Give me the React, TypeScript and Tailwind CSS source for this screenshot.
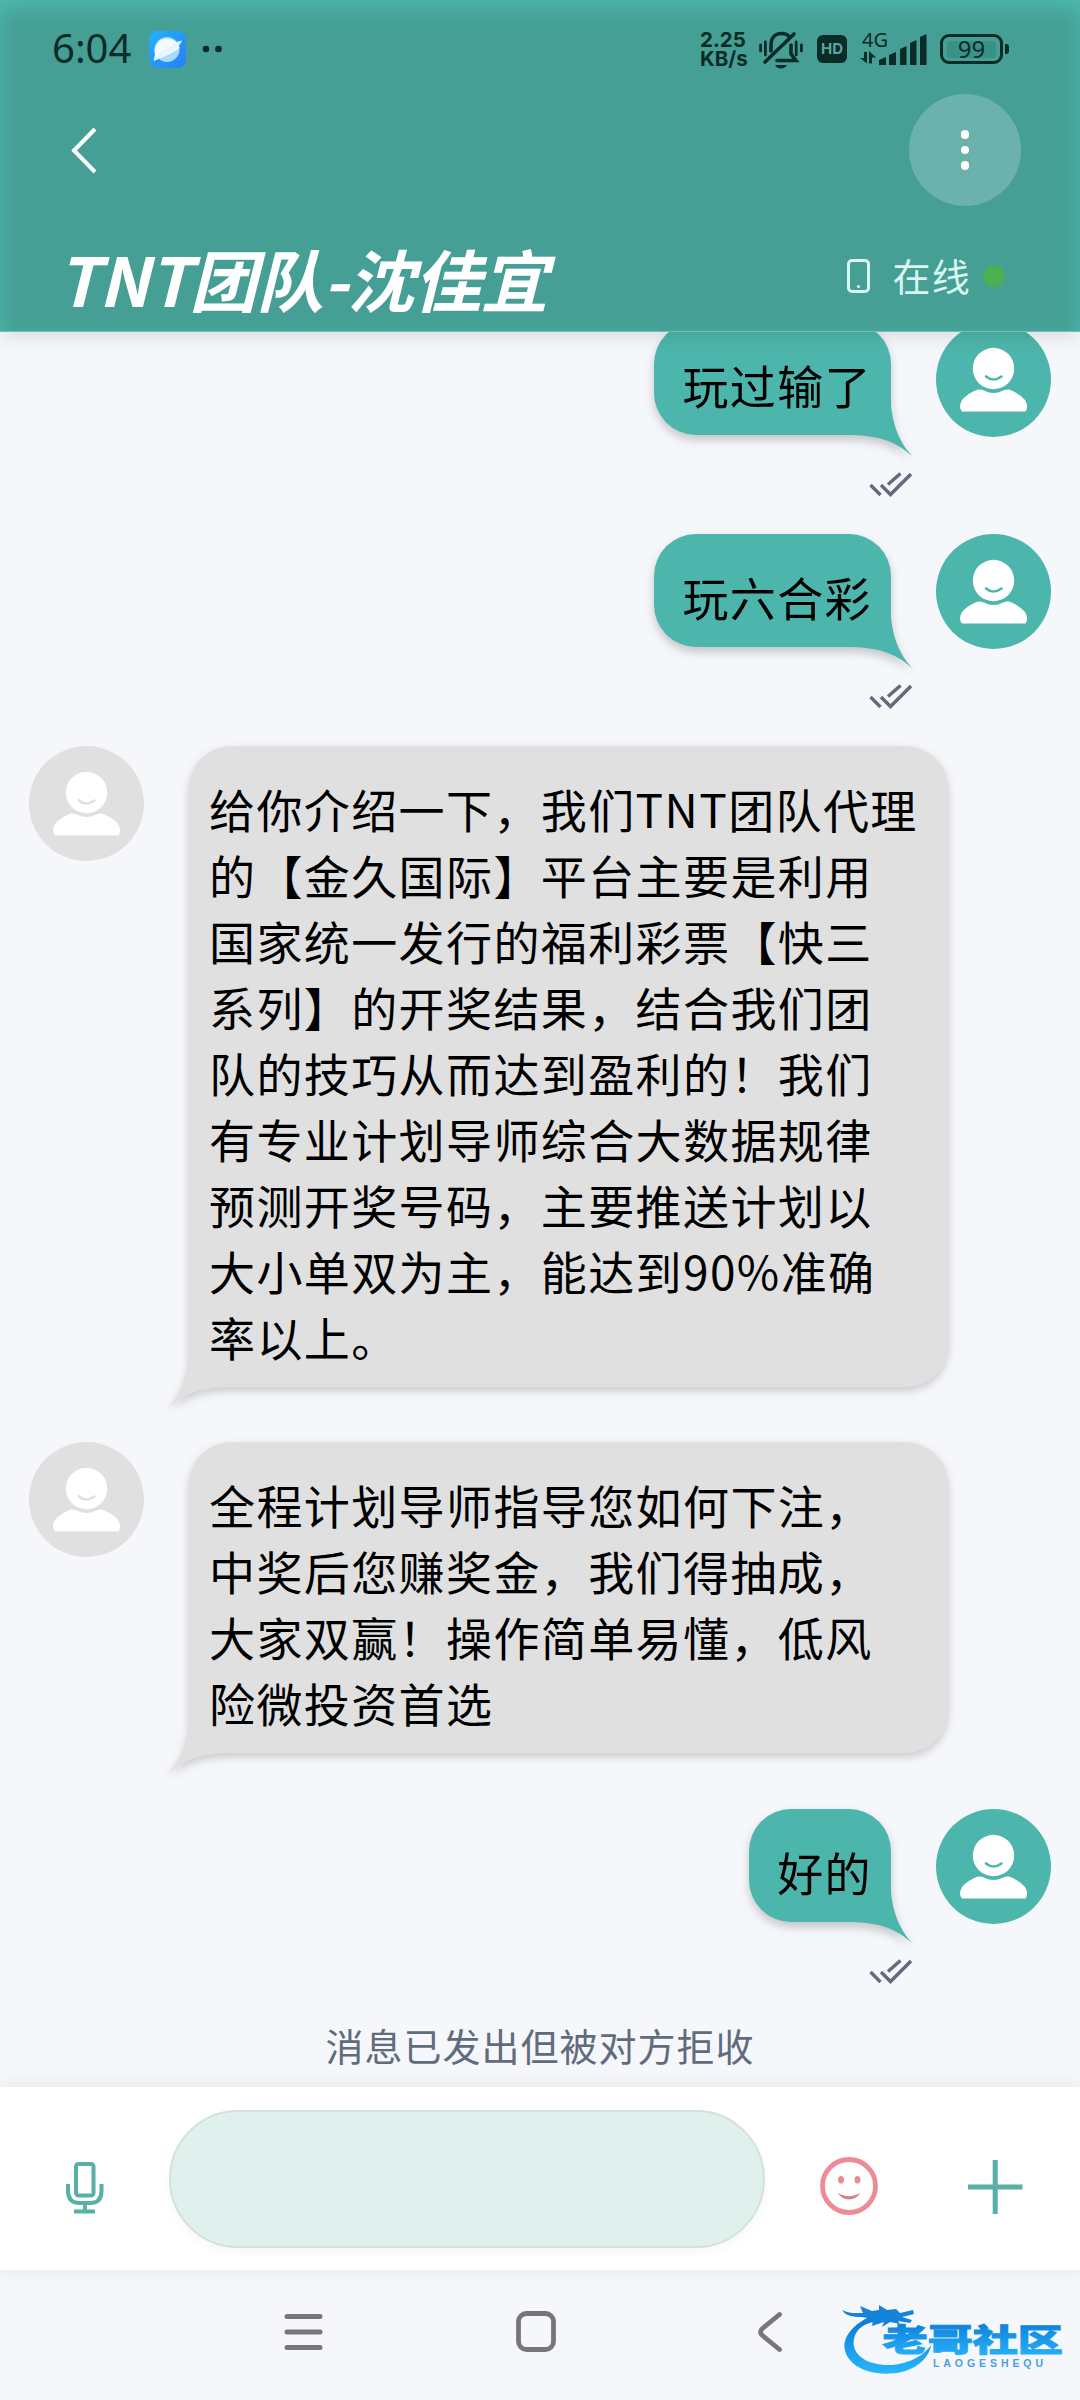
import React from "react";

type Message = {
  id: number;
  mine: boolean;
  lines: string[];
};

const messages: Message[] = [
  { id: 1, mine: true, lines: ["玩过输了"] },
  { id: 2, mine: true, lines: ["玩六合彩"] },
  {
    id: 3,
    mine: false,
    lines: [
      "给你介绍一下，我们TNT团队代理",
      "的【金久国际】平台主要是利用",
      "国家统一发行的福利彩票【快三",
      "系列】的开奖结果，结合我们团",
      "队的技巧从而达到盈利的！我们",
      "有专业计划导师综合大数据规律",
      "预测开奖号码，主要推送计划以",
      "大小单双为主，能达到90%准确",
      "率以上。",
    ],
  },
  {
    id: 4,
    mine: false,
    lines: [
      "全程计划导师指导您如何下注，",
      "中奖后您赚奖金，我们得抽成，",
      "大家双赢！操作简单易懂，低风",
      "险微投资首选",
    ],
  },
  { id: 5, mine: true, lines: ["好的"] },
];

const StatusBar = () => (
  <div className="flex h-[94px] items-start pl-[52px] pt-[31px] text-[#0b2b27]">
    <span className="-mt-[2px] w-[97px] font-['Noto_Sans'] text-[40px] leading-[37px]">6:04</span>
    <svg width="37" height="37" viewBox="0 0 37 37">
      <defs>
        <linearGradient id="planetBg" x1="0" y1="0" x2="1" y2="1">
          <stop offset="0" stopColor="#22b4fb" />
          <stop offset="1" stopColor="#2a7cf7" />
        </linearGradient>
      </defs>
      <rect width="37" height="37" rx="8" fill="url(#planetBg)" />
      <circle cx="18" cy="18.5" r="12.5" fill="#a9dbff" />
      <path d="M6 23.5A12.5 12.5 0 1 1 30.5 17C24 22 15 26 5 29.500Z" fill="#f4fbff" />
      <path d="M27 11L33 9.500Q32 16 5 30Q4 27.500 7 24Z" fill="#e6f6ff" />
    </svg>
    <svg width="22" height="37" viewBox="0 0 22 37" className="ml-[15px]">
      <circle cx="5" cy="18" r="3.300" fill="currentColor" />
      <circle cx="17.500" cy="18" r="3.300" fill="currentColor" />
    </svg>

    <div className="ml-auto flex items-start pr-[71px]">
      <div className="w-[59px] whitespace-pre font-['Inter'] text-[20.500px] font-bold leading-[18.500px]">
        {"2.25\nKB/s"}
      </div>
      <svg width="46" height="38" viewBox="0 0 46 38" fill="none" stroke="currentColor" strokeWidth="3.600" strokeLinecap="round">
        <path d="M1.600 14v6M6.400 11v13M42.400 14v6M37.200 11v13" strokeWidth="2.800" />
        <path d="M12 20V14C12 6 17 2.500 22.500 2.500C26 2.500 28.500 3.500 30 5.500" />
        <path d="M32 14V23L37 29.500H18" />
        <path d="M35 3L6 31" />
        <path d="M16 34H28Q26 37.500 22 37.500T16 34Z" fill="currentColor" stroke="none" />
      </svg>
      <div className="ml-[12px] mt-[4px] flex h-[28px] w-[30px] items-center justify-center rounded-[6px] bg-[#0b2b27] font-['Inter'] text-[15px] font-bold text-[#58a79f]">
        HD
      </div>
      <div className="ml-[13px] w-[19px]">
        <div className="h-[20px] whitespace-nowrap pl-[2px] font-['Noto_Sans'] text-[20px] leading-[18px]">4G</div>
        <svg width="16" height="14" viewBox="0 0 16 14" fill="currentColor">
          <path d="M4 1H7V12.500L0 7H4ZM9 12.500V0L16 6.500H12V12.500Z" />
        </svg>
      </div>
      <svg width="48" height="36" viewBox="0 0 48 36" fill="currentColor" className="-mr-[1px]">
        <path d="M0 34V29L7 26V34ZM10 34V24L17 21V34ZM21 34V18L27.500 15V34ZM31 34V12L37.500 9V34ZM41 34V6L47.500 3V34Z" />
      </svg>
      <div className="ml-[14px] mt-[3px] flex items-center">
        <div className="flex h-[30px] w-[63px] items-center justify-center rounded-[9px] border-[3px] border-[#0b2b27] p-[4px]">
          <div className="flex h-[17px] w-full items-center justify-center rounded-[3px] bg-[#3b9187] font-['Noto_Sans'] text-[24px]">
            99
          </div>
        </div>
        <div className="ml-[2px] h-[10px] w-[4px] rounded-r-[3px] bg-[#0b2b27]" />
      </div>
    </div>
  </div>
);

const Header = () => (
  <header className="relative z-10 h-[332px] shrink-0 border-b border-[#6cc0b6] bg-[#459f95] shadow-[inset_0_8px_18px_2px_#4db6ac,0_0_22px_rgba(0,0,0,0.16)]">
    <StatusBar />
    <div className="flex h-[112px] items-center justify-between pl-[70px] pr-[59px]">
      <svg width="28" height="48" viewBox="0 0 28 48" fill="none" stroke="#fff" strokeWidth="4">
        <path d="M25 3L4 24.500L25 46" />
      </svg>
      <div className="flex h-[112px] w-[112px] flex-col items-center justify-center gap-[7px] rounded-full bg-[#6ab2ab]">
        <span className="h-[8.500px] w-[8.500px] rounded-full bg-white" />
        <span className="h-[8.500px] w-[8.500px] rounded-full bg-white" />
        <span className="h-[8.500px] w-[8.500px] rounded-full bg-white" />
      </div>
    </div>
    <div className="flex items-start pl-[57px] pr-[75px]">
      <h1 className="mt-[22px] whitespace-nowrap text-[67.500px] font-bold italic leading-[100px] tracking-[-0.800px] text-white">
        TNT团队-沈佳宜
      </h1>
      <div className="ml-auto mt-[46px] flex items-center text-[#d9f6f1]">
        <svg width="23" height="34" viewBox="0 0 23 34" fill="none" stroke="currentColor" strokeWidth="3">
          <rect x="1.500" y="1.500" width="20" height="31" rx="3.500" />
          <circle cx="11.500" cy="27.500" r="1.600" fill="currentColor" stroke="none" />
        </svg>
        <span className="-mt-[2px] ml-[23px] text-[38px] leading-[50px] tracking-[1.200px]">在线</span>
        <span className="ml-[12px] h-[22px] w-[22px] rounded-full bg-[#4caf50]" />
      </div>
    </div>
  </header>
);

const Avatar = ({ mine }: { mine: boolean }) => {
  const color = mine ? "#4db6ac" : "#e0e0e0";
  return (
    <svg width="115" height="115" viewBox="0 0 115 115" className="shrink-0">
      <circle cx="57.500" cy="57.500" r="57.500" fill={color} />
      <circle cx="57.500" cy="46.500" r="20.700" fill="#fff" />
      <path d="M50 54.500Q57.500 60.500 65.500 54.500" fill="none" stroke={color} strokeWidth="2.600" strokeLinecap="round" />
      <path
        d="M42 67.500Q45 67 48 68.500Q57.500 73.500 67 68.500Q70 67 73 67.500Q83 71 89 78Q93 85 89.500 89.500H26Q22 85 26 78Q32 71 42 67.500Z"
        fill="#fff"
      />
    </svg>
  );
};

const Ticks = () => (
  <svg width="43" height="25" viewBox="0 0 43 25" fill="none" stroke="#616b7b" strokeWidth="3.400">
    <path d="M1.500 13L11.500 23M12 13L21.500 22.500L42 2M19 12.500L31.500 1.500" />
  </svg>
);

const OutgoingMessage = ({ message }: { message: Message }) => (
  <div className="flex h-[212px] justify-end pr-[29px]">
    <div className="flex flex-col items-end">
      <div className="relative mr-[21px] rounded-[42px] rounded-br-none bg-[#4db6ac] pb-[18px] pl-[28px] pr-[19px] pt-[29px] drop-shadow-[0_5px_5px_rgba(0,0,0,0.2)]">
        {message.lines.map((line) => (
          <p key={line} className="whitespace-nowrap">
            {line}
          </p>
        ))}
        <svg width="66" height="64" viewBox="0 0 66 64" className="absolute -bottom-[21px] -right-[21px]">
          <path d="M44 0C45 26 50 46 66 64C48 48 30 43 0 43H44Z" fill="#4db6ac" />
        </svg>
      </div>
      <div className="mt-[37px]">
        <Ticks />
      </div>
    </div>
    <div className="ml-[24px]">
      <Avatar mine />
    </div>
  </div>
);

const IncomingMessage = ({ message }: { message: Message }) => (
  <div className="mb-[55.300px] flex items-start pl-[29px]">
    <Avatar mine={false} />
    <div className="relative ml-[44.500px] w-[759.500px] rounded-[42px] rounded-bl-none bg-[#e0e0e0] pb-[18px] pl-[20.500px] pt-[29px] drop-shadow-[0_4px_4px_rgba(0,0,0,0.18)]">
      {message.lines.map((line) => (
        <p key={line} className="whitespace-nowrap">
          {line}
        </p>
      ))}
      <svg width="66" height="64" viewBox="0 0 66 64" className="absolute -bottom-[21px] -left-[21px]">
        <path d="M22 0C21 26 16 46 0 64C18 48 36 43 66 43H22Z" fill="#e0e0e0" />
      </svg>
    </div>
  </div>
);

const InputBar = () => (
  <div className="relative z-10 flex h-[183px] shrink-0 items-start bg-white pl-[66px] pt-[23px] shadow-[0_0_20px_rgba(0,0,0,0.07)]">
    <svg width="38" height="52" viewBox="0 0 38 52" fill="none" stroke="#58b0a6" strokeWidth="4" className="mt-[52px]">
      <rect x="10" y="2" width="17.500" height="31.500" rx="2.500" />
      <path d="M2 22V29Q2 41 14 41H24Q35.500 41 35.500 29V22M19 41V49M8 49.500H29" />
    </svg>
    <div className="ml-[65px] h-[138px] w-[596px] rounded-full border-[2.500px] border-[#d3e1de] bg-[#dff0ed] shadow-[0_5px_10px_rgba(0,0,0,0.03)]" />
    <svg width="58" height="58" viewBox="0 0 58 58" className="ml-[55px] mt-[47px]">
      <circle cx="29" cy="29" r="26.500" fill="none" stroke="#ef8b97" strokeWidth="4.800" />
      <ellipse cx="21" cy="22.700" rx="3" ry="3.700" fill="#e98a95" />
      <ellipse cx="37.500" cy="22.700" rx="3" ry="3.700" fill="#e98a95" />
      <path d="M17.500 35.500Q29 43 40.500 35.500Q36 42.500 29 42.500T17.500 35.500Z" fill="#d08486" />
    </svg>
    <svg width="55" height="55" viewBox="0 0 55 55" stroke="#58b0a6" strokeWidth="5" className="ml-[90px] mt-[50px]">
      <path d="M0 27H54.500M27.200 0V54" />
    </svg>
  </div>
);

const SiteLogo = () => (
  <svg width="224" height="76" viewBox="0 0 224 76" className="absolute right-[16px] top-[30px]">
    <defs>
      <linearGradient id="logoBlue" x1="0" y1="0" x2="0" y2="1">
        <stop offset="0.150" stopColor="#0c80dc" />
        <stop offset="1" stopColor="#29b6fb" />
      </linearGradient>
    </defs>
    <path
      d="M34 15C10 24 -4 44 10 60C22 76 58 78 76 66C84 61 90 53 91 45C83 57 66 65 48 65C26 65 11 54 14 39C16 28 26 22 40 21Z"
      fill="url(#logoBlue)"
    />
    <path
      d="M2 10C9 14 17 13 23 13L20 6L32 11L39 10V5L47 10L56 9L60 13L73 10L74 14L62 17L72 20L70 23L58 21L60 24L50 22L42 27L44 22L32 26L33 19L22 17C12 17 6 16 2 10Z"
      fill="#1583d9"
    />
    <text
      x="30"
      y="51"
      transform="scale(1.420 1)"
      textLength="127"
      lengthAdjust="spacingAndGlyphs"
      fontSize="31"
      fontWeight="900"
      stroke="url(#logoBlue)"
      strokeWidth="1"
      fill="url(#logoBlue)"
    >
      老哥社区
    </text>
    <text x="93" y="66.500" textLength="110" fontSize="10.500" fontWeight="700" fill="#4a9fe3" className="font-['Liberation_Sans']">
      LAOGESHEQU
    </text>
  </svg>
);

const NavBar = () => (
  <nav className="relative flex h-[130px] shrink-0 items-start pl-[284px] pt-[40px] text-[#777]">
    <svg width="39" height="44" viewBox="0 0 39 44" stroke="currentColor" strokeWidth="5" strokeLinecap="round">
      <path d="M3 6.500H36M3 22H36M3 37.500H36" />
    </svg>
    <svg width="42" height="44" viewBox="0 0 42 44" fill="none" stroke="currentColor" strokeWidth="4.800" className="ml-[192px]">
      <rect x="3.500" y="3.500" width="35" height="36" rx="8" />
    </svg>
    <svg width="28" height="44" viewBox="0 0 28 44" fill="none" stroke="currentColor" strokeWidth="4.800" strokeLinecap="round" className="ml-[199px]">
      <path d="M23.500 4.500L6.500 18.500Q2.500 22 6.500 25.500L23.500 39.500" />
    </svg>
    <SiteLogo />
  </nav>
);

const App: React.FC = () => {
  return (
    <div className="flex h-[2400px] w-[1080px] flex-col overflow-hidden bg-[#f5f7fb] font-['Noto_Sans_CJK_SC',sans-serif]">
      <Header />
      <main className="h-[1755px] shrink-0 overflow-hidden text-[46px] leading-[66px] tracking-[1.400px] text-black">
        <div className="-mt-[10px]">
          {messages.map((message) =>
            message.mine ? (
              <OutgoingMessage key={message.id} message={message} />
            ) : (
              <IncomingMessage key={message.id} message={message} />
            )
          )}
        </div>
        <p className="-mt-[1px] text-center text-[38px] leading-[50px] tracking-[1px] text-[#616b7b]">
          消息已发出但被对方拒收
        </p>
      </main>
      <InputBar />
      <NavBar />
    </div>
  );
};

export default App;
